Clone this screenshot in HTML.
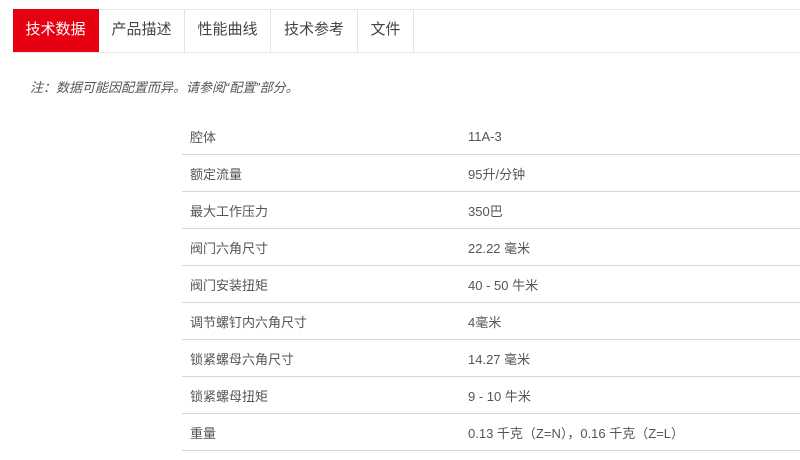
<!DOCTYPE html>
<html><head><meta charset="utf-8"><style>
body{margin:0;width:800px;height:460px;background:#fff;font-family:"Liberation Sans","Noto Sans CJK SC",sans-serif;overflow:hidden;position:relative}
.tabs{position:absolute;left:13px;top:9px;right:0;height:42px;border-top:1px solid #e8e8e8;border-bottom:1px solid #e8e8e8}
.tab{position:absolute;top:-1px;height:43px;line-height:42px;text-align:center;font-size:15px;color:#444;border-right:1px solid #e4e4e4;box-sizing:border-box}
.tab.a{background:#e60012;color:#fff;border-color:#e60012}
.note{position:absolute;left:30px;top:77px;font-size:13px;font-style:italic;color:#555}
table{position:absolute;left:182px;top:118px;width:618px;border-collapse:collapse;font-size:13px;color:#555}
td{height:36px;border-bottom:1px solid #d8d8d8;padding:0 0 0 8px}
td.l{width:270px}
</style></head><body>
<div class="tabs">
<div class="tab a" style="left:0;width:86px">技术数据</div>
<div class="tab" style="left:86px;width:86px;border-left:0">产品描述</div>
<div class="tab" style="left:172px;width:86px">性能曲线</div>
<div class="tab" style="left:258px;width:87px">技术参考</div>
<div class="tab" style="left:345px;width:56px">文件</div>
</div>
<div class="note">注：数据可能因配置而异。请参阅“配置”部分。</div>
<table>
<tr><td class="l">腔体</td><td>11A-3</td></tr>
<tr><td class="l">额定流量</td><td>95升/分钟</td></tr>
<tr><td class="l">最大工作压力</td><td>350巴</td></tr>
<tr><td class="l">阀门六角尺寸</td><td>22.22 毫米</td></tr>
<tr><td class="l">阀门安装扭矩</td><td>40 - 50 牛米</td></tr>
<tr><td class="l">调节螺钉内六角尺寸</td><td>4毫米</td></tr>
<tr><td class="l">锁紧螺母六角尺寸</td><td>14.27 毫米</td></tr>
<tr><td class="l">锁紧螺母扭矩</td><td>9 - 10 牛米</td></tr>
<tr><td class="l">重量</td><td>0.13 千克（Z=N），0.16 千克（Z=L）</td></tr>
</table>
</body></html>
